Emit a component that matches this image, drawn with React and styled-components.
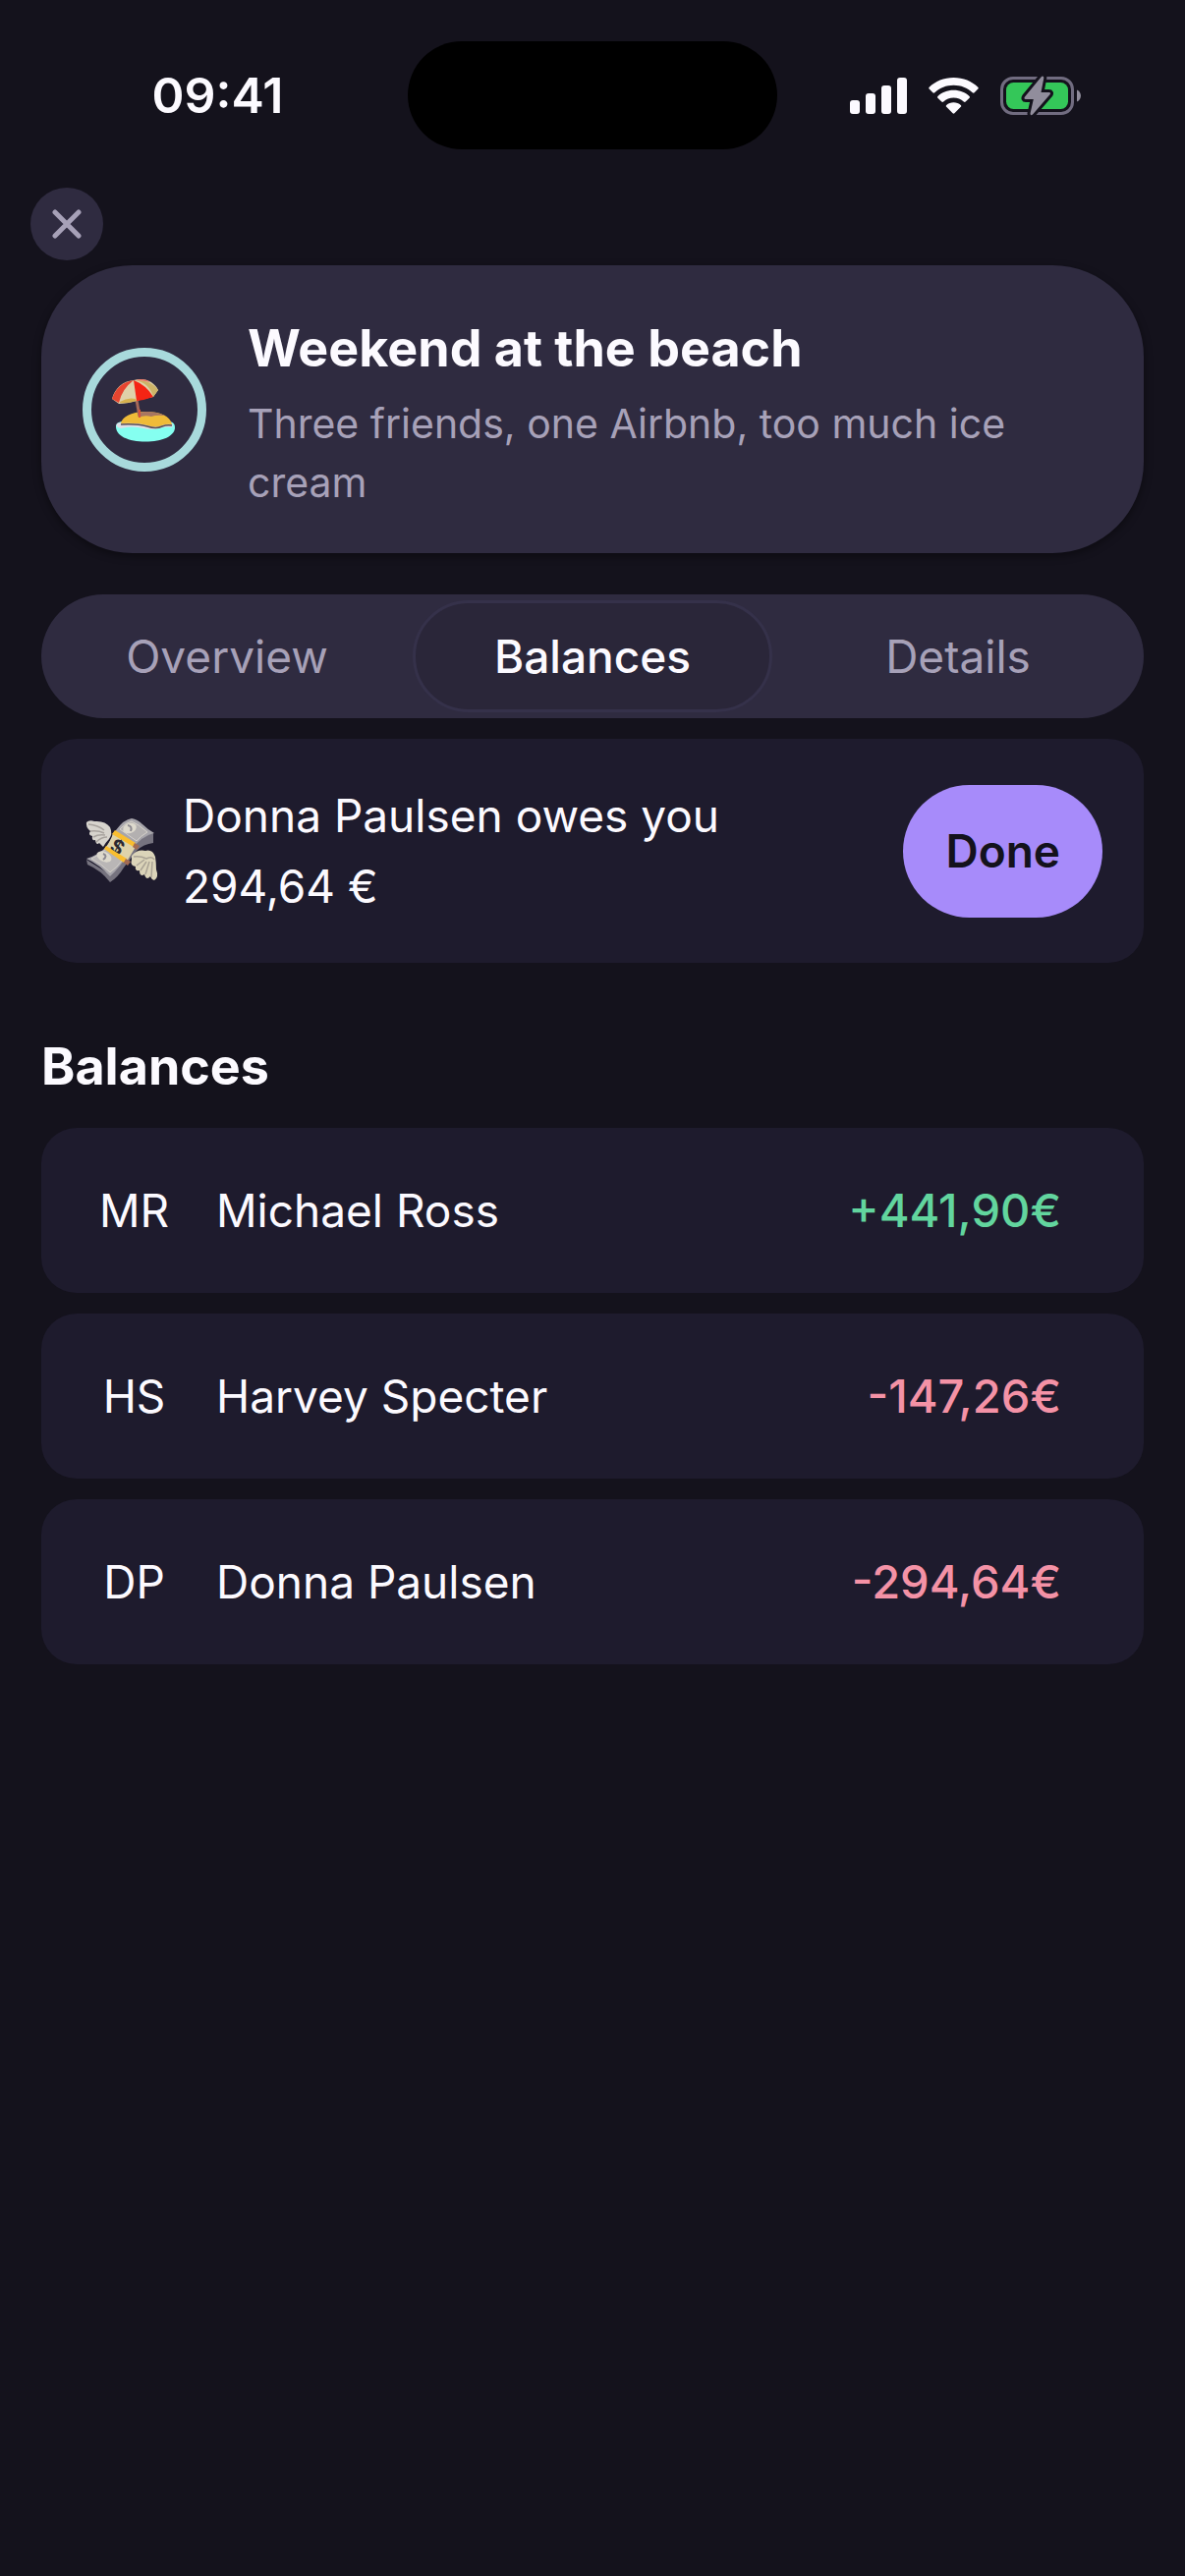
import React, { useState } from 'react';
import styled, { createGlobalStyle } from 'styled-components';

const GlobalStyle = createGlobalStyle`
* {
  box-sizing: border-box;
}

body {
  margin: 0;
  background: #14121c;
  color: #fcfaff;
  font-family: Inter, "Liberation Sans", sans-serif;
  font-size: 46px;
  line-height: 72px;
}

h1, h2, p, ul {
  margin: 0;
  padding: 0;
}

button {
  border: 0;
  font: inherit;
  cursor: pointer;
}

svg {
  flex: none;
}
`;

const Screen = styled.div`
min-height: 100vh;
`;

const StatusBar = styled.header`
display: grid;
grid-template-columns: 1fr 376px 1fr;
align-items: center;
padding: 42px 0 39px;
`;

const Clock = styled.time`
justify-self: center;
padding-left: 28px;
font-size: 50px;
font-weight: 600;
`;

const Island = styled.div`
height: 110px;
border-radius: 55px;
background: #000;
`;

const StatusIcons = styled.div`
display: flex;
justify-content: center;
align-items: center;
gap: 22px;
padding-right: 33px;
`;

const CloseButton = styled.button`
display: flex;
justify-content: center;
align-items: center;
width: 74px;
height: 74px;
margin: 0 31px 5px;
padding: 0;
border-radius: 50%;
background: #2f2b40;
color: #a7a1b8;
`;

const Content = styled.main`
padding: 0 42px;
`;

const TripCard = styled.section`
display: flex;
align-items: center;
gap: 42px;
margin-bottom: 42px;
padding: 42px;
border-radius: 93px;
background: #2f2b40;
box-shadow: 0 3px 9px rgba(0, 0, 0, 0.4);
`;

const TripBadge = styled.div`
display: flex;
justify-content: center;
align-items: center;
flex: none;
width: 126px;
height: 126px;
border: 9px solid #a8dadc;
border-radius: 50%;
`;

const TripText = styled.div`
padding-top: 7px;
`;

const TripTitle = styled.h1`
padding-bottom: 10px;
font-size: 52px;
font-weight: 700;
`;

const TripNote = styled.p`
color: #a7a1b8;
font-size: 41px;
line-height: 60px;
`;

const Tabs = styled.div`
display: grid;
grid-template-columns: repeat(3, 1fr);
gap: 6px;
margin-bottom: 21px;
padding: 6px;
border-radius: 63px;
background: #2f2b40;
`;

const Tab = styled.button`
height: 114px;
border: 3px solid ${props => (props.$active ? '#35314a' : 'transparent')};
border-radius: 57px;
background: ${props => (props.$active ? '#2a2639' : 'transparent')};
color: ${props => (props.$active ? '#fcfaff' : '#a7a1b8')};
font-weight: ${props => (props.$active ? 500 : 400)};
`;

const DebtCard = styled.section`
display: flex;
align-items: center;
gap: 24px;
padding: 42px;
border-radius: 36px;
background: #1e1b2d;
`;

const DebtText = styled.p`
flex: 1;
`;

const DebtAmount = styled.span`
display: block;
`;

const DoneButton = styled.button`
height: 135px;
padding: 0 43px;
border-radius: 68px;
background: #a78bfa;
color: #14121c;
font-weight: 600;
`;

const SectionTitle = styled.h2`
padding: 70px 0 26px;
font-size: 52px;
font-weight: 700;
`;

const BalanceList = styled.ul`
display: grid;
gap: 21px;
list-style: none;
`;

const BalanceRow = styled.li`
display: flex;
align-items: center;
gap: 31px;
height: 168px;
padding: 0 84px 0 42px;
border-radius: 36px;
background: #1e1b2d;
`;

const Initials = styled.span`
width: 105px;
text-align: center;
`;

const Name = styled.span`
flex: 1;
`;

const Amount = styled.span`
color: ${props => (props.$positive ? '#62d59e' : '#f492a6')};
font-size: 47px;
font-weight: 500;
`;

const SignalIcon = () => (
  <svg width="58" height="37" viewBox="0 0 58 37" fill="#fcfaff">
    <rect x="0" y="23" width="10" height="14" rx="3" />
    <rect x="16" y="16" width="10" height="21" rx="3" />
    <rect x="32" y="8" width="10" height="29" rx="3" />
    <rect x="48" y="0" width="10" height="37" rx="3" />
  </svg>
);

const WifiIcon = () => (
  <svg width="51" height="37" viewBox="0 0 51 37" fill="#fcfaff">
    <path d="M25.500 0C35.500 0 44 3.700 50.300 9.700Q51.200 10.600 50.300 11.600L46.700 15.200Q45.700 16.100 44.700 15.200C39.500 10.400 33 7.700 25.500 7.700S11.500 10.400 6.300 15.200Q5.300 16.100 4.300 15.200L.7 11.600Q-.2 10.600 .7 9.700C7 3.700 15.500 0 25.500 0Z" />
    <path d="M25.500 12.700C32 12.700 37.400 15 41.600 18.900Q42.500 19.800 41.600 20.700L37.700 24.500Q36.800 25.300 35.800 24.500C33 22 29.500 20.500 25.500 20.500S18 22 15.200 24.500Q14.200 25.300 13.300 24.500L9.400 20.700Q8.500 19.800 9.400 18.900C13.600 15 19 12.700 25.500 12.700Z" />
    <path d="M25.500 25.300C28.300 25.300 30.900 26.300 32.800 28Q33.700 28.900 32.800 29.800L26.400 36.300Q25.500 37.200 24.600 36.300L18.200 29.800Q17.300 28.900 18.200 28C20.100 26.300 22.700 25.300 25.500 25.300Z" />
  </svg>
);

const BatteryIcon = () => (
  <svg width="82" height="41" viewBox="0 0 82 41">
    <rect x="1.500" y="2.500" width="72" height="36" rx="11.500" fill="none" stroke="#716c80" strokeWidth="3" />
    <path d="M78 14.500C83.300 16.500 83.300 24.500 78 26.500Z" fill="#918d9c" />
    <rect x="6" y="7" width="63" height="27" rx="7.500" fill="#34c759" />
    <path d="M43.500 .7Q42.700 .2 41.500 1.500L25 21.500Q23.500 24 26 24H33.800L30.500 38.500Q30.600 41.300 33 39.500L50.500 19.300Q52 17 49.500 17H41.500L44.300 2.500Q44.400 1.200 43.500 .7Z" fill="#918d9c" stroke="#14121c" strokeWidth="6" strokeLinejoin="round" paintOrder="stroke" />
  </svg>
);

const CloseIcon = () => (
  <svg width="30" height="30" viewBox="0 0 30 30" fill="none" stroke="currentColor" strokeWidth="5" strokeLinecap="round">
    <path d="M3 3L27 27M27 3L3 27" />
  </svg>
);

const BeachIcon = () => (
  <svg width="66" height="66" viewBox="0 0 66 66">
    <path d="M4 49C5 46 8 45 11 45H59Q64 46 64 51C64 60 51 65.500 34 65.500S3 60 4 49Z" fill="#85fff0" />
    <path d="M5 47Q12 44 20 46L60 46Q63 48 61 51Q53 50 48 52Q41 54 32 52Q20 49 9 52Q3 51 5 47Z" fill="#dedfe7" />
    <path d="M9 47C10 41 19 35 34 35S59 39 61 48Q56 47 51 49Q45 52 36 49Q25 46 9 47Z" fill="#efbb38" />
    <path d="M9 48Q25 47 36 50Q45 53 51 50Q56 48 61 49" fill="none" stroke="#594c52" strokeWidth="1.500" />
    <path d="M27 36Q40 33 54 39Q45 38 40 40Q33 38 27 41Z" fill="#a87661" />
    <path d="M25 23L28 40" stroke="#a56958" strokeWidth="3" />
    <path d="M28 33L28 41" stroke="#d9513c" strokeWidth="2" />
    <path d="M0 22C3 11 11 4 22 3C34 0 43 5 47 13L42 20Q32 22 25 24Q15 27 7 27Z" fill="#dfd1a9" />
    <path d="M22 3Q5 6 0 22L7 26Q10 12 22 3Z" fill="#e64530" />
    <path d="M22 3L25 24Q34 23 42 20Q35 8 22 3Z" fill="#f52414" />
    <path d="M24 3Q38 6 42 20L47 13Q39 2 24 3Z" fill="#cdb468" />
    <path d="M24 3Q33 0 39 5Q30 3 24 3Z" fill="#ee7768" />
    <path d="M8 25Q16 20 24 22L25 24Q15 27 8 26Z" fill="#d6b24e" />
  </svg>
);

const MoneyIcon = () => (
  <svg width="78" height="66" viewBox="-4 0 78 66">
    <path d="M0 42L24 57Q36 44 42 36Q54 18 68 15L68 25Q58 26 51 33L38 50Q32 60 24 65Q15 53 1 47Z" fill="#76737f" />
    <path d="M0 41Q13 37 21 28L30 12Q38 1 46 0Q52 1 57 6Q62 11 69 15Q55 18 44 34Q34 50 24 59Q13 47 0 41Z" fill="#a7a5ab" />
    <path d="M5 41Q14 37 20 31L37 42Q31 50 24 55Q15 46 5 41Z" fill="#b9b6b6" stroke="#d5d1ca" />
    <path d="M34 11Q40 4 46 3Q53 6 62 14Q55 18 51 23Z" fill="#b3b0b0" stroke="#d5d1ca" />
    <ellipse cx="44" cy="10" rx="7" ry="5" transform="rotate(-20 44 10)" fill="#ddd9cd" />
    <ellipse cx="18" cy="39" rx="8" ry="5" transform="rotate(25 18 39)" fill="#ddd9cd" />
    <path d="M42 7Q47 8 45 13M17 36Q22 38 17 42" fill="none" stroke="#8d8a91" strokeWidth="2" />
    <path d="M27 15L50 29L41 44L19 30Q25 23 27 15Z" fill="#ded3aa" />
    <text x="31" y="36" fontSize="20" fontWeight="700" fill="#2b2831" textAnchor="middle" transform="rotate(30 31 30)">$</text>
    <path d="M29 12L50 25L48 29L26 16Z" fill="#f9be30" />
    <path d="M20 28L41 41L38 45L18 31Z" fill="#f9be30" />
    <path d="M49 25L54 28L51 32L47 29ZM40 41L45 44L42 48L38 45Z" fill="#a36b52" />
    <path d="M0 4Q3 1 8 3Q19 2 24 9Q27 16 23 21Q20 24 17 29L13 25Q10 28 9 22Q5 23 6 18Q1 17 4 13Q-1 9 0 4Z" fill="#d7d4cd" />
    <path d="M2 6Q12 7 18 12M4 13Q12 12 18 15M7 19Q12 16 19 17M10 24Q15 19 21 19" fill="none" stroke="#a8a39e" strokeWidth="1.500" />
    <path d="M46 38Q52 31 60 33Q67 31 70 39Q71 45 71 52Q74 60 69 63Q66 62 65 59Q61 64 59 57Q54 60 54 53Q49 54 50 49Q44 48 46 42Z" fill="#dbd4b9" />
    <path d="M48 39Q55 38 61 41Q67 38 69 42M51 48L59 42M55 53L61 44M60 57L64 44M66 60L67 44" fill="none" stroke="#aaa395" strokeWidth="1.500" />
  </svg>
);

const balances = [
  { initials: 'MR', name: 'Michael Ross', amount: '+441,90€', positive: true },
  { initials: 'HS', name: 'Harvey Specter', amount: '-147,26€' },
  { initials: 'DP', name: 'Donna Paulsen', amount: '-294,64€' },
];

const tabs = ['Overview', 'Balances', 'Details'];

const App = () => {
  const [activeTab, setActiveTab] = useState('Balances');

  return (
    <Screen>
      <GlobalStyle />
      <StatusBar>
        <Clock>09:41</Clock>
        <Island />
        <StatusIcons>
          <SignalIcon />
          <WifiIcon />
          <BatteryIcon />
        </StatusIcons>
      </StatusBar>

      <CloseButton aria-label="Close">
        <CloseIcon />
      </CloseButton>

      <Content>
        <TripCard>
          <TripBadge>
            <BeachIcon />
          </TripBadge>
          <TripText>
            <TripTitle>Weekend at the beach</TripTitle>
            <TripNote>Three friends, one Airbnb, too much ice cream</TripNote>
          </TripText>
        </TripCard>

        <Tabs role="tablist">
          {tabs.map(tab => (
            <Tab
              key={tab}
              role="tab"
              aria-selected={tab === activeTab}
              $active={tab === activeTab}
              onClick={() => setActiveTab(tab)}
            >
              {tab}
            </Tab>
          ))}
        </Tabs>

        <DebtCard>
          <MoneyIcon />
          <DebtText>
            Donna Paulsen owes you
            <DebtAmount>294,64 €</DebtAmount>
          </DebtText>
          <DoneButton>Done</DoneButton>
        </DebtCard>

        <SectionTitle>Balances</SectionTitle>
        <BalanceList>
          {balances.map(item => (
            <BalanceRow key={item.initials}>
              <Initials>{item.initials}</Initials>
              <Name>{item.name}</Name>
              <Amount $positive={item.positive}>{item.amount}</Amount>
            </BalanceRow>
          ))}
        </BalanceList>
      </Content>
    </Screen>
  );
};

export default App;
